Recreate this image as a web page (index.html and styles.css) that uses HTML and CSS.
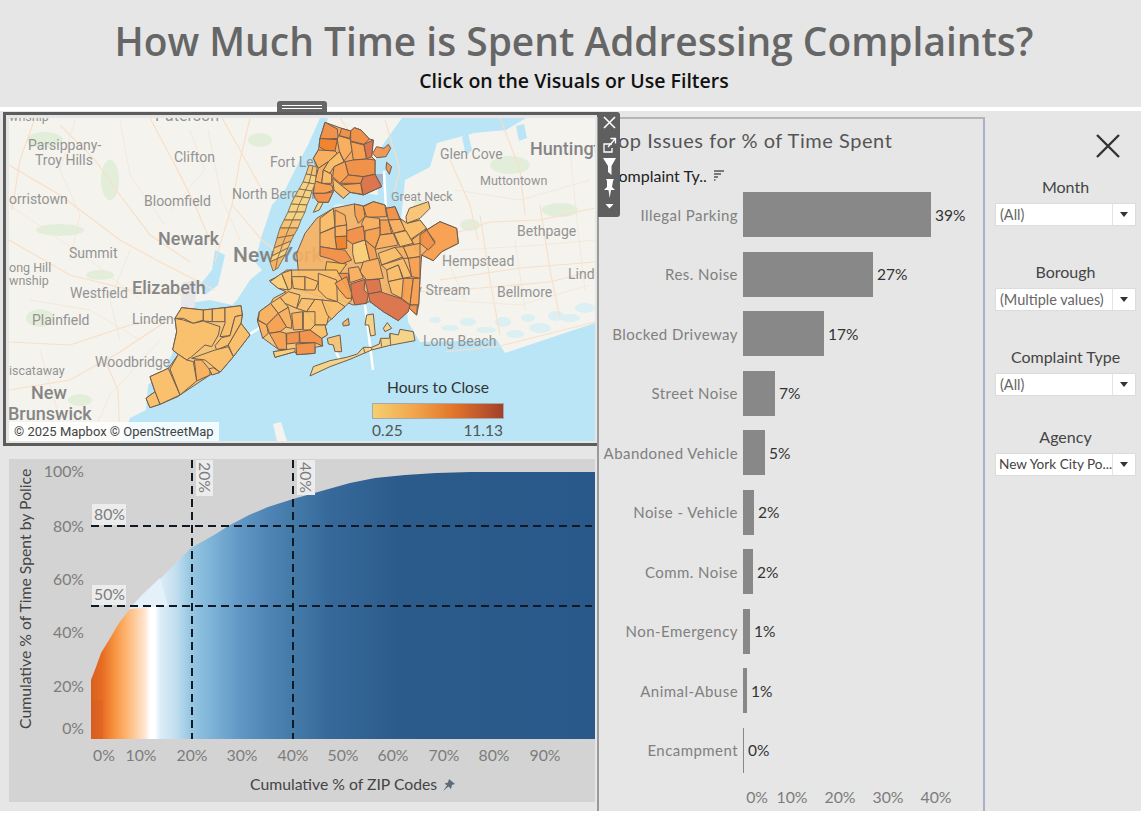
FILE: index.html
```html
<!DOCTYPE html>
<html lang="en">
<head>
    <meta charset="UTF-8">
    <meta name="viewport" content="width=device-width, initial-scale=1.0">
    <title>How Much Time is Spent Addressing Complaints?</title>
    <link rel="stylesheet" href="styles.css">
</head>
<body>

    <header class="title-bar">
        <h1>How Much Time is Spent Addressing Complaints?</h1>
        <p>Click on the Visuals or Use Filters</p>
    </header>

    <main class="board">
        <section class="left-col">
            <div class="grip"><span></span><span></span></div>

            <div class="map-frame">
                <svg class="map" viewBox="9 118 586 323" width="586" height="323">
                    <rect x="9" y="118" width="586" height="323" class="water"/>
                    <!-- land -->
                    <polygon class="land" points="9,118 320,118 308,145 300,160 285,190 272,205 262,235 255,262 262,270 250,280 237,300 232,305 210,300 190,303 178,315 176,345 165,370 148,385 146,410 130,418 122,441 9,441"/>
                    <polygon class="land" points="328,118 402,118 382,146 375,160 378,195 340,190 315,160"/>
                    <polygon class="land" points="405,180 430,167 437,143 474,133 506,130 526,118 595,118 595,323 505,353 497,340 420,342 413,330 408,322 400,230"/>
                    <polygon class="land" points="273,424 281,422 287,441 277,441"/>
                    <polygon class="water" points="215,250 225,255 218,285 205,295 200,285 212,270"/>
                    <polygon class="water" points="462,137 468,133 472,150 466,156"/>
                    <polygon class="water" points="516,126 524,124 527,138 519,141"/>
                    <polygon class="airport" points="183,282 198,280 194,310 180,310"/>
                    <ellipse class="rikers" cx="340" cy="207" rx="7" ry="3"/>
                    <g class="marsh">
                        <ellipse cx="450" cy="328" rx="9" ry="3"/>
                        <ellipse cx="468" cy="322" rx="8" ry="4"/>
                        <ellipse cx="486" cy="330" rx="10" ry="3"/>
                        <ellipse cx="503" cy="322" rx="8" ry="5"/>
                        <ellipse cx="515" cy="334" rx="9" ry="4"/>
                        <ellipse cx="528" cy="318" rx="7" ry="4"/>
                        <ellipse cx="540" cy="328" rx="11" ry="5"/>
                        <ellipse cx="556" cy="316" rx="8" ry="5"/>
                        <ellipse cx="570" cy="318" rx="10" ry="4"/>
                        <ellipse cx="585" cy="308" rx="10" ry="5"/>
                        <ellipse cx="435" cy="320" rx="6" ry="3"/>
                    </g>

                    <!-- parks -->
                    <g class="park">
                        <ellipse cx="45" cy="140" rx="18" ry="8"/>
                        <ellipse cx="110" cy="180" rx="9" ry="20"/>
                        <ellipse cx="60" cy="230" rx="24" ry="6"/>
                        <ellipse cx="100" cy="275" rx="14" ry="5"/>
                        <ellipse cx="40" cy="318" rx="14" ry="9"/>
                        <ellipse cx="260" cy="140" rx="12" ry="7"/>
                        <ellipse cx="420" cy="205" rx="7" ry="5"/>
                        <ellipse cx="510" cy="165" rx="20" ry="9"/>
                        <ellipse cx="560" cy="210" rx="18" ry="7"/>
                        <ellipse cx="470" cy="225" rx="10" ry="6"/>
                        <ellipse cx="80" cy="400" rx="12" ry="6"/>
                    </g>

                    <!-- roads -->
                    <g class="road">
                        <path d="M9 165 L60 195 L120 240 L160 262 L215 290"/>
                        <path d="M60 125 L95 160 L120 195 L150 235 L190 262"/>
                        <path d="M150 118 L175 165 L195 205 L212 245"/>
                        <path d="M9 240 L70 275 L130 290 L190 295"/>
                        <path d="M9 342 L70 345 L130 325 L175 318"/>
                        <path d="M35 118 L20 160 L12 210"/>
                        <path d="M250 118 L240 160 L232 205 L215 262"/>
                        <path d="M222 118 L240 150 L262 190"/>
                        <path d="M232 205 L262 240 L275 250"/>
                        <path d="M9 390 L70 380 L120 352 L165 322"/>
                        <path d="M120 441 L118 390 L105 360"/>
                        <path d="M340 118 L362 150"/>
                        <path d="M440 238 L490 222 L540 220 L595 208"/>
                        <path d="M480 215 L490 280 L500 335"/>
                        <path d="M540 205 L550 270 L560 318"/>
                        <path d="M415 292 L480 288 L550 282 L595 270"/>
                        <path d="M450 160 L470 205 L478 240"/>
                        <path d="M440 280 L520 268 L595 262"/>
                        <path d="M500 118 L520 170 L525 215"/>
                        <path d="M385 120 L400 170 L392 200"/>
                        <path d="M445 352 L500 346 L595 322"/>
                    </g>
                    <g class="road-thin">
                        <path d="M9 205 L90 260 L140 300"/>
                        <path d="M120 120 L130 175 L165 225"/>
                        <path d="M208 130 L222 200 L240 240"/>
                        <path d="M460 250 L540 245 L595 240"/>
                        <path d="M445 300 L520 305 L590 285"/>
                        <path d="M30 300 L90 310 L140 340"/>
                        <path d="M75 120 L60 170 L80 215 L70 260"/>
                        <path d="M130 250 L110 300 L120 340"/>
                        <path d="M40 350 L60 420"/>
                        <path d="M160 340 L110 395 L90 440"/>
                        <path d="M190 130 L205 170 L170 210"/>
                        <path d="M455 190 L520 200 L590 180"/>
                        <path d="M430 220 L465 300"/>
                        <path d="M515 240 L525 310"/>
                        <path d="M570 150 L578 230 L585 290"/>
                        <path d="M345 122 L370 140"/>
                    </g>
                    <polygon class="shield" points="375,174 383,174 383,184 379,189 375,184"/>

                    <!-- place names -->
                    <g class="place">
                        <text x="155" y="121" class="place-lg">Paterson</text>
                        <text x="9" y="121" class="place-sm">wnship</text>
                        <text x="28" y="150">Parsippany-</text>
                        <text x="35" y="165">Troy Hills</text>
                        <text x="174" y="162">Clifton</text>
                        <text x="270" y="167">Fort Lee</text>
                        <text x="232" y="199">North Bergen</text>
                        <text x="440" y="159">Glen Cove</text>
                        <text x="530" y="155" class="place-xl">Huntington</text>
                        <text x="480" y="185" class="place-sm">Muttontown</text>
                        <text x="391" y="201" class="place-sm">Great Neck</text>
                        <text x="9" y="204">orristown</text>
                        <text x="144" y="206">Bloomfield</text>
                        <text x="158" y="245" class="place-xl">Newark</text>
                        <text x="233" y="262" class="place-xxl">New York</text>
                        <text x="69" y="258">Summit</text>
                        <text x="9" y="272" class="place-sm">ong Hill</text>
                        <text x="9" y="285" class="place-sm">wnship</text>
                        <text x="132" y="294" class="place-xl">Elizabeth</text>
                        <text x="70" y="298">Westfield</text>
                        <text x="32" y="325">Plainfield</text>
                        <text x="132" y="324">Linden</text>
                        <text x="95" y="367">Woodbridge</text>
                        <text x="9" y="375" class="place-sm">iscataway</text>
                        <text x="31" y="399" class="place-xl">New</text>
                        <text x="8" y="420" class="place-xl">Brunswick</text>
                        <text x="517" y="236">Bethpage</text>
                        <text x="442" y="266">Hempstead</text>
                        <text x="385" y="295">Valley Stream</text>
                        <text x="497" y="297">Bellmore</text>
                        <text x="568" y="279">Linden</text>
                        <text x="423" y="346">Long Beach</text>
                    </g>

                    <!-- bridges -->
                    <g class="bridge">
                        <path d="M250 334 L264 325"/>
                        <path d="M365 305 L373 370"/>
                        <path d="M335 350 L340 360"/>
                        <path d="M384 171 L386 210"/>
                    </g>

                    <!-- Bronx -->
                    <g class="zips" transform="translate(260 115) scale(.3333)">
                        <polygon class="h3" points="195,22 245,40 272,48 283,38 303,45 328,72 340,75 335,125 345,135 345,178 365,215 310,240 270,232 250,250 222,225 205,262 175,262 160,235 165,198 175,160 160,130 175,105 177,95 180,70 188,45"/>
                        <polygon class="h4" points="195,22 232,42 235,70 200,72 180,70 188,45"/>
                        <polygon class="h5" points="180,70 200,72 232,74 225,108 195,106 177,95"/>
                        <polygon class="h2" points="235,62 270,72 278,105 252,138 238,108 232,75"/>
                        <polygon class="h4" points="245,40 272,48 270,70 238,62"/>
                        <polygon class="h4" points="272,48 283,38 303,45 328,72 312,88 272,78"/>
                        <polygon class="h3" points="272,80 312,90 320,132 280,135"/>
                        <polygon class="h6" points="312,88 340,75 335,125 320,132"/>
                        <polygon class="h4" points="350,95 372,100 385,88 392,100 378,125 350,128 338,115"/>
                        <polygon class="h4" points="380,142 395,155 388,178 378,160"/>
                        <polygon class="h4" points="280,135 320,132 345,135 345,178 310,185 265,180 255,140"/>
                        <polygon class="h6" points="310,185 345,178 365,215 310,240 302,205"/>
                        <polygon class="h3" points="255,140 265,180 240,205 218,185 222,155"/>
                        <polygon class="h4" points="240,205 265,180 310,185 302,205"/>
                        <polygon class="h3" points="240,210 302,205 308,238 270,232"/>
                        <polygon class="h1" points="218,190 240,208 270,232 250,250 222,225"/>
                        <polygon class="h2" points="160,130 175,105 195,106 225,108 232,115 205,140 175,160"/>
                        <polygon class="h1" points="205,140 238,110 252,140 222,155 210,175 190,165"/>
                        <polygon class="h2" points="175,160 205,140 190,165 185,205 165,198"/>
                        <polygon class="h1" points="190,165 215,178 215,205 185,205"/>
                        <polygon class="h3" points="165,198 185,205 215,210 220,225 195,235 160,235"/>
                        <polygon class="h4" points="160,235 195,235 220,230 205,262 175,262 165,250"/>
                        <polygon class="h0" points="175,262 190,262 178,285 160,292"/>
                    </g>

                    <!-- Manhattan -->
                    <g class="zips-page">
                        <polygon class="h1" points="309,165 317,167 316,176 306,174"/>
                        <polygon class="h0" points="306,174 316,176 315,184 303,182"/>
                        <polygon class="h0" points="303,182 315,184 312,191 299,189"/>
                        <polygon class="h0" points="299,189 312,191 310,198 295,196"/>
                        <polygon class="h0" points="295,196 310,198 307,205 291,204"/>
                        <polygon class="h0" points="291,204 307,205 305,212 288,212"/>
                        <polygon class="h0" points="288,212 305,212 301,220 284,220"/>
                        <polygon class="h1" points="284,220 301,220 298,228 280,228"/>
                        <polygon class="h2" points="280,228 298,228 294,235 277,238"/>
                        <polygon class="h2" points="277,238 294,235 291,241 274,248"/>
                        <polygon class="h1" points="274,248 291,241 288,248 272,256"/>
                        <polygon class="h0" points="272,256 288,248 285,255 270,262"/>
                        <polygon class="h2" points="270,262 285,255 278,268 273,271"/>
                        <polyline class="spine" points="313,166 311,175 309,183 305.5,190 302.5,197 299,204.5 296.5,212 292.5,220 289,228 285.5,236.5 282.5,244.5 280,252 277.5,258.5 275.5,269.5"/>
                    </g>

                    <!-- Queens -->
                    <g class="zips" transform="translate(320 190) scale(.3333)">
                        <polygon class="h2" points="-70,190 -45,130 -10,85 40,55 103,42 130,48 160,35 195,45 200,55 225,50 240,85 258,100 300,90 320,120 360,95 410,115 415,160 365,185 340,212 305,195 300,265 296,345 290,375 268,355 235,392 190,365 150,335 100,345 60,330 0,320 -60,300"/>
                        <polygon class="h1" points="268,55 325,35 330,55 300,85 260,100 258,80"/>
                        <polygon class="h3" points="103,42 130,48 135,80 115,100 105,75"/>
                        <polygon class="h3" points="130,50 160,35 195,45 200,80 140,82"/>
                        <polygon class="h4" points="198,55 225,50 240,88 205,90"/>
                        <polygon class="h2" points="135,80 178,85 180,115 130,125 125,100"/>
                        <polygon class="h3" points="180,90 205,90 215,130 180,135"/>
                        <polygon class="h2" points="205,90 240,88 258,120 220,130"/>
                        <polygon class="h1" points="240,85 262,100 300,90 320,115 270,150 255,120"/>
                        <polygon class="h4" points="80,122 130,108 135,150 98,162 80,150"/>
                        <polygon class="h3" points="135,122 180,112 180,135 165,175 135,150"/>
                        <polygon class="h2" points="180,135 220,130 235,165 165,178"/>
                        <polygon class="h1" points="222,130 258,122 280,160 240,170"/>
                        <polygon class="h2" points="275,150 320,115 300,160 290,185 280,160"/>
                        <polygon class="h3" points="320,120 360,95 410,115 415,160 365,185 340,212 305,195 330,170 345,155"/>
                        <polygon class="h4" points="300,135 320,120 345,160 325,180 300,160"/>
                        <polygon class="h5" points="45,140 80,138 80,175 50,178"/>
                        <polygon class="h1" points="0,85 40,55 45,110 0,130"/>
                        <polygon class="h2" points="45,60 75,75 80,105 45,110"/>
                        <polygon class="h2" points="45,110 80,105 80,138 45,140"/>
                        <polygon class="h2" points="0,130 45,112 45,140 50,178 0,170"/>
                        <polygon class="h4" points="0,170 50,178 75,180 85,195 95,210 65,222 35,208 0,198"/>
                        <polygon class="h0" points="98,162 135,150 150,215 105,220 98,190"/>
                        <polygon class="h3" points="135,150 165,175 172,205 150,215"/>
                        <polygon class="h1" points="175,190 225,172 250,200 185,225"/>
                        <polygon class="h2" points="225,172 250,170 265,205 250,205"/>
                        <polygon class="h2" points="250,170 300,160 300,200 265,205"/>
                        <polygon class="h3" points="265,205 300,200 300,265 275,260"/>
                        <polygon class="h1" points="185,225 250,205 275,260 250,265 235,225 200,240"/>
                        <polygon class="h1" points="200,240 235,225 248,265 205,275"/>
                        <polygon class="h2" points="130,215 175,205 190,265 140,270 120,245"/>
                        <polygon class="h2" points="85,235 115,230 130,265 90,278"/>
                        <polygon class="h1" points="205,275 250,265 255,300 245,325 215,310"/>
                        <polygon class="h3" points="250,265 280,265 270,345 245,325"/>
                        <polygon class="h3" points="280,265 300,265 296,345 270,345"/>
                        <polygon class="h4" points="270,345 292,345 290,375 268,355"/>
                        <polygon class="h0 warm" points="20,215 80,222 60,250 40,270 15,245"/>
                        <polygon class="h4" points="55,250 85,250 90,315 70,325 55,290"/>
                        <polygon class="h6" points="92,282 135,268 132,300 145,312 140,340 105,345 95,315"/>
                        <polygon class="h6" points="135,270 178,268 185,305 145,312"/>
                        <polygon class="h6" points="145,312 180,305 240,325 270,345 265,365 235,392 190,365 150,335"/>
                    </g>

                    <!-- Brooklyn and the bay -->
                    <g class="zips" transform="translate(250 270) scale(.3333)">
                        <polygon class="h1" points="58,32 85,18 110,0 260,0 300,70 305,90 285,110 262,130 225,165 232,195 215,205 218,228 195,232 195,250 140,254 135,245 75,262 70,245 110,240 85,238 40,205 22,150 28,125 62,100 70,85 108,65 85,55"/>
                        <polygon class="h0" points="60,35 95,10 115,60 85,55"/>
                        <polygon class="h1" points="95,10 125,0 125,55 115,60"/>
                        <polygon class="h1" points="125,20 165,20 165,60 130,55"/>
                        <polygon class="h1" points="165,20 205,35 195,60 165,60"/>
                        <polygon class="h1" points="205,10 260,30 262,95 230,85 205,60"/>
                        <polygon class="h3" points="255,40 290,20 305,70 305,85 290,85 268,60"/>
                        <polygon class="h1" points="115,65 150,75 140,115 105,100 90,82"/>
                        <polygon class="h1" points="155,85 195,88 170,125 140,115"/>
                        <polygon class="h1" points="195,88 220,90 240,120 230,165 195,165 170,125"/>
                        <polygon class="h1" points="215,90 262,95 285,110 262,130 245,148 232,135"/>
                        <polygon class="h2" points="28,125 62,100 85,130 50,165 25,150"/>
                        <polygon class="h1" points="62,100 90,82 115,112 85,130"/>
                        <polygon class="h2" points="22,150 50,165 55,190 38,205"/>
                        <polygon class="h3" points="50,165 85,130 110,170 90,185 58,190"/>
                        <polygon class="h2" points="85,130 115,112 125,155 125,175 110,172"/>
                        <polygon class="h3" points="58,190 90,185 108,190 110,238 85,238"/>
                        <polygon class="h4" points="110,190 148,185 148,218 110,222"/>
                        <polygon class="h2" points="125,130 158,125 158,178 130,180"/>
                        <polygon class="h1" points="160,125 195,125 195,165 180,180 160,180"/>
                        <polygon class="h4" points="148,185 180,180 215,205 218,228 195,218 150,218"/>
                        <polygon class="h4" points="138,222 195,218 195,250 140,254"/>
                        <polygon class="h0" points="75,262 70,245 135,235 135,245"/>
                        <polygon class="h1" points="195,165 225,165 232,195 215,205 180,180"/>
                        <polygon class="h1" points="232,205 270,195 275,245 255,245 250,225 235,222"/>
                        <polygon class="h2" points="278,158 295,145 298,165 280,168"/>
                        <polygon class="h0" points="350,135 370,132 376,195 362,198 356,165 345,165"/>
                        <polygon class="h0" points="400,175 412,158 425,175 405,185"/>
                        <polygon class="h0" points="180,318 240,290 300,268 365,240 420,226 495,212 490,185 450,178 445,195 420,190 418,205 392,205 388,222 365,232 340,232 322,252 290,262 240,272 190,290"/>
                        <path class="cut" d="M365 232 L365 240 M392 205 L395 230 M420 190 L422 226 M340 232 L345 250"/>
                    </g>

                    <!-- Staten Island -->
                    <g class="zips" transform="translate(135 295) scale(.3333)">
                        <polygon class="h1" points="140,38 205,45 270,38 318,32 322,60 318,85 345,120 295,185 255,232 225,240 135,300 128,305 75,328 45,338 33,310 60,290 45,245 100,220 130,178 113,165 125,110 120,70"/>
                        <polygon class="h1" points="120,70 140,38 205,45 205,75 175,85 145,70"/>
                        <polygon class="h1" points="205,45 232,42 232,80 205,78"/>
                        <polygon class="h1" points="232,42 270,38 270,80 232,80"/>
                        <polygon class="h1" points="270,38 318,32 322,60 300,65 285,122 255,125 270,85"/>
                        <polygon class="h1" points="130,178 113,165 125,110 120,70 145,75 175,85 205,78 255,95 250,120 230,155 210,150 170,185 155,195"/>
                        <polygon class="h1" points="300,65 322,60 318,85 280,150 245,165 240,152 260,128 285,122"/>
                        <polygon class="h1" points="318,85 345,120 295,185 280,150"/>
                        <polygon class="h1" points="170,190 240,165 280,155 295,185 255,232 235,215 210,195"/>
                        <polygon class="h2" points="178,195 200,195 225,225 225,240 185,258"/>
                        <polygon class="h1" points="222,222 235,218 255,232 232,240"/>
                        <polygon class="h1" points="130,178 155,195 175,200 185,258 135,300 105,222"/>
                        <polygon class="h1" points="45,245 100,220 135,300 75,328 60,290"/>
                        <polygon class="h1" points="33,310 60,290 75,328 45,338"/>
                    </g>

                    <!-- legend -->
                    <defs>
                        <linearGradient id="hours">
                            <stop offset="0" stop-color="#f4d071"/>
                            <stop offset=".3" stop-color="#f2a850"/>
                            <stop offset=".62" stop-color="#e2752a"/>
                            <stop offset="1" stop-color="#a23f2b"/>
                        </linearGradient>
                        <linearGradient id="share" gradientUnits="userSpaceOnUse" x1="91" y1="0" x2="595" y2="0">
                            <stop offset="0" stop-color="#d85f20"/>
                            <stop offset=".024" stop-color="#e86e24"/>
                            <stop offset=".044" stop-color="#f58f3c"/>
                            <stop offset=".067" stop-color="#fdb06a"/>
                            <stop offset=".087" stop-color="#fecb9c"/>
                            <stop offset=".109" stop-color="#fee9d8"/>
                            <stop offset=".117" stop-color="#ffffff"/>
                            <stop offset=".127" stop-color="#ffffff"/>
                            <stop offset=".137" stop-color="#dcedf7"/>
                            <stop offset=".167" stop-color="#c4dff0"/>
                            <stop offset=".196" stop-color="#98c8e3"/>
                            <stop offset=".236" stop-color="#7fb5d8"/>
                            <stop offset=".296" stop-color="#6197c5"/>
                            <stop offset=".355" stop-color="#4e83b5"/>
                            <stop offset=".401" stop-color="#447aa8"/>
                            <stop offset=".474" stop-color="#36699a"/>
                            <stop offset=".613" stop-color="#2b5b8b"/>
                            <stop offset="1" stop-color="#29588a"/>
                        </linearGradient>
                    </defs>
                    <text x="438" y="393" class="legend-title">Hours to Close</text>
                    <rect x="372.5" y="403.5" width="131" height="15" fill="url(#hours)" class="legend-bar"/>
                    <text x="372" y="436" class="legend-num">0.25</text>
                    <text x="503" y="436" class="legend-num legend-end">11.13</text>

                    <rect x="9" y="422" width="210" height="19" class="credit-box"/>
                    <text x="14" y="436" class="credit">© 2025 Mapbox © OpenStreetMap</text>
                </svg>
            </div>

            <div class="toolbar">
                <svg width="22" height="105" viewBox="0 0 22 105">
                    <path class="tool-line" d="M6 5 L17 16 M17 5 L6 16"/>
                    <path class="tool-thin" d="M14 32 L6 32 L6 40 L14 40 L14 36 M10 35 L17 27 M12.5 26.500 L17.500 26.500 L17.500 31.500"/>
                    <polygon class="tool-fill" points="5,46 18,46 13.500,54 13.500,63 10,60 10,54"/>
                    <path class="tool-fill" d="M8 67 L16 67 L15 69 L14 75 L17 78 L13 78 L11.700 86 L10.500 78 L6 78 L9 75 L9 69 Z"/>
                    <polygon class="tool-fill" points="7.500,92 15.500,92 11.500,96.500"/>
                </svg>
            </div>

            <div class="curve-panel">
                <svg viewBox="9 459 586 343" width="586" height="343">
                    <polygon fill="url(#share)" points="91,739 91,680 96,667 101,653 109,640 119,623 130,609 142,595 161,578 176,563 191,548 214,535 230,525 249,515 268,507 293,499 325,490 350,483 375,478 405,475 436,473 471,472 595,472 595,739"/>
                    <polygon class="curve-top" points="129,609 142,595 160,578 168,606"/>
                    <polygon class="curve-dark" points="91,739 91,700 103,700 103,739"/>

                    <rect x="196" y="460" width="17" height="36" class="ref-box"/>
                    <rect x="297" y="460" width="18" height="35" class="ref-box"/>
                    <rect x="92" y="504" width="34" height="21" class="ref-box"/>
                    <rect x="92" y="585" width="34" height="20" class="ref-box"/>
                    <text transform="translate(199 462) rotate(90)" class="tick">20%</text>
                    <text transform="translate(300 462) rotate(90)" class="tick">40%</text>
                    <text x="94" y="520" class="tick">80%</text>
                    <text x="94" y="600" class="tick">50%</text>

                    <path class="ref-line" d="M192 460 V739 M293 460 V739 M91 526 H592 M91 606 H592"/>

                    <g class="tick tick-end">
                        <text x="84" y="477">100%</text>
                        <text x="84" y="532">80%</text>
                        <text x="84" y="585">60%</text>
                        <text x="84" y="638">40%</text>
                        <text x="84" y="692">20%</text>
                        <text x="84" y="734">0%</text>
                    </g>
                    <g class="tick tick-mid">
                        <text x="104" y="761">0%</text>
                        <text x="141" y="761">10%</text>
                        <text x="192" y="761">20%</text>
                        <text x="242" y="761">30%</text>
                        <text x="293" y="761">40%</text>
                        <text x="343" y="761">50%</text>
                        <text x="393" y="761">60%</text>
                        <text x="444" y="761">70%</text>
                        <text x="494" y="761">80%</text>
                        <text x="545" y="761">90%</text>
                    </g>
                    <text transform="translate(31 729) rotate(-90)" class="axis-name">Cumulative % of Time Spent by Police</text>
                    <text x="250" y="790" class="axis-name">Cumulative % of ZIP Codes</text>
                    <path class="axis-pin" d="M449 779 L455 784 L452 785 L451 789 L448.500 786.500 L443 791 L447 785.500 L444.500 783.500 L448 782.500 Z"/>
                </svg>
            </div>
        </section>

        <section class="issues">
            <h2>Top Issues for % of Time Spent</h2>
            <div class="issues-head">
                <span>Complaint Ty..</span>
                <svg width="12" height="12" viewBox="0 0 12 12"><path class="sort-icon" d="M1 2 H11 M1 5 H8 M1 8 H5 M1 11 H2.500"/></svg>
            </div>
            <div class="bars">
                <div class="bar-row"><span class="bar-label">Illegal Parking</span><div class="bar" style="width:188px"></div><span class="bar-value">39%</span></div>
                <div class="bar-row"><span class="bar-label">Res. Noise</span><div class="bar" style="width:130px"></div><span class="bar-value">27%</span></div>
                <div class="bar-row"><span class="bar-label">Blocked Driveway</span><div class="bar" style="width:81px"></div><span class="bar-value">17%</span></div>
                <div class="bar-row"><span class="bar-label">Street Noise</span><div class="bar" style="width:32px"></div><span class="bar-value">7%</span></div>
                <div class="bar-row"><span class="bar-label">Abandoned Vehicle</span><div class="bar" style="width:22px"></div><span class="bar-value">5%</span></div>
                <div class="bar-row"><span class="bar-label">Noise - Vehicle</span><div class="bar" style="width:11px"></div><span class="bar-value">2%</span></div>
                <div class="bar-row"><span class="bar-label">Comm. Noise</span><div class="bar" style="width:10px"></div><span class="bar-value">2%</span></div>
                <div class="bar-row"><span class="bar-label">Non-Emergency</span><div class="bar" style="width:7px"></div><span class="bar-value">1%</span></div>
                <div class="bar-row"><span class="bar-label">Animal-Abuse</span><div class="bar" style="width:4px"></div><span class="bar-value">1%</span></div>
                <div class="bar-row"><span class="bar-label">Encampment</span><div class="bar" style="width:1px"></div><span class="bar-value">0%</span></div>
            </div>
            <div class="bar-axis">
                <span class="axis-zero">0%</span><span>10%</span><span>20%</span><span>30%</span><span>40%</span>
            </div>
        </section>

        <aside class="filters">
            <svg class="close-x" width="24" height="24" viewBox="0 0 24 24"><path d="M1 1 L23 23 M23 1 L1 23"/></svg>

            <div class="filter">
                <label>Month</label>
                <div class="select"><span>(All)</span><i></i></div>
            </div>
            <div class="filter">
                <label>Borough</label>
                <div class="select"><span>(Multiple values)</span><i></i></div>
            </div>
            <div class="filter">
                <label>Complaint Type</label>
                <div class="select"><span>(All)</span><i></i></div>
            </div>
            <div class="filter filter-last">
                <label>Agency</label>
                <div class="select"><span class="picked">New York City Po...</span><i></i></div>
            </div>
        </aside>
    </main>

</body>
</html>
```

FILE: styles.css
```css
body {
    margin: 0;
    background-color: white;
    font-family: 'Lato', 'Open Sans', sans-serif;
    overflow: hidden;
}

.title-bar {
    height: 107px;
    padding-left: 7px;
    box-sizing: border-box;
    background-color: #e6e6e6;
    text-align: center;
    font-family: 'Open Sans', sans-serif;
}

.title-bar h1 {
    margin: 0;
    padding-top: 15px;
    font-size: 38.900px;
    line-height: 52px;
    font-weight: 600;
    color: #666666;
}

.title-bar p {
    margin: 0;
    font-size: 19.500px;
    line-height: 27px;
    font-weight: 600;
    color: #111;
}

.board {
    display: flex;
    align-items: flex-start;
    height: 700px;
    margin-top: 4px;
    background-color: #e6e6e6;
}

/* left column */
.left-col {
    position: relative;
    width: 598px;
    margin-left: 3px;
    padding-top: 1px;
    flex: none;
}

.grip {
    position: absolute;
    left: 274px;
    top: -10px;
    width: 50px;
    height: 11px;
    background: #666;
    border-radius: 3px 3px 0 0;
    display: flex;
    flex-direction: column;
    align-items: center;
    justify-content: center;
    gap: 2px;
}

.grip span {
    display: block;
    width: 40px;
    height: 1px;
    background: #fff;
}

.map-frame {
    box-sizing: border-box;
    width: 597px;
    height: 334px;
    padding: 3px 2px 2px 3px;
    border: 3px solid #5c5c5c;
}

.map {
    display: block;
}

.water { fill: #b9e5f6; }
.land { fill: #f5f3ee; }
.marsh ellipse { fill: #dceff2; }
.airport { fill: #e8e8ec; }
.rikers { fill: #d9eff7; }
.park ellipse { fill: #e3eeda; }
.road path { fill: none; stroke: #f8dfc6; stroke-width: 1.1; }
.road-thin path { fill: none; stroke: #f3e6d6; stroke-width: .8; }
.bridge path { fill: none; stroke: #ffffff; stroke-width: 2.5; }
.shield { fill: #a4b4ca; }

.place text {
    font-family: 'Roboto', sans-serif;
    font-size: 14px;
    fill: #939393;
}

.place .place-sm { font-size: 12.500px; }
.place .place-lg { font-size: 16px; }
.place .place-xl { font-size: 18px; font-weight: 500; fill: #858585; }
.place .place-xxl { font-size: 21px; font-weight: 500; fill: #858585; }

.zips polygon {
    stroke: #6f5c4e;
    stroke-width: 3;
    fill-opacity: .9;
}

.zips-page polygon {
    stroke: #7c6a52;
    stroke-width: .9;
    fill-opacity: .95;
}

.spine, .cut {
    fill: none;
    stroke: #7c6a52;
}

.spine { stroke-width: .9; }
.cut { stroke-width: 3; }

.h0 { fill: #f9d27c; }
.h1 { fill: #f9c06c; }
.h2 { fill: #f8b060; }
.h3 { fill: #f6a052; }
.h4 { fill: #f18f48; }
.h5 { fill: #ef7f2a; }
.h6 { fill: #d9704c; }
.warm { fill: #f9bd58; }

.legend-title {
    font-size: 15.600px;
    fill: #333;
    text-anchor: middle;
}

.legend-bar { stroke: #a8a8a8; stroke-width: 1; }

.legend-num {
    font-size: 15.500px;
    fill: #555;
}

.legend-end { text-anchor: end; }

.credit-box { fill: rgba(255, 255, 255, .82); }

.credit {
    font-family: 'Roboto', sans-serif;
    font-size: 13px;
    fill: #444;
}

.toolbar {
    position: absolute;
    left: 595px;
    top: 1px;
    width: 22px;
    height: 105px;
    background: #5f5f5f;
    border-radius: 0 3px 3px 0;
    z-index: 2;
}

.toolbar svg { display: block; }

.tool-line { fill: none; stroke: #fff; stroke-width: 1.6; }
.tool-thin { fill: none; stroke: #fff; stroke-width: 1.3; }
.tool-fill { fill: #fff; }

.curve-panel {
    width: 586px;
    height: 343px;
    margin: 13px 0 0 6px;
    background-color: #d3d3d3;
}

.curve-panel svg { display: block; }

.curve-top { fill: #e4f1f9; }
.curve-dark { fill: #d45a20; opacity: .3; }
.ref-box { fill: #ececec; }

.ref-line {
    fill: none;
    stroke: #111a24;
    stroke-width: 2;
    stroke-dasharray: 8 5;
}

.tick {
    font-size: 15.800px;
    fill: #7c7c7c;
}

.tick-end { text-anchor: end; }
.tick-mid { text-anchor: middle; }

.axis-name {
    font-size: 15.750px;
    fill: #444;
}

.axis-pin { fill: #5e6b78; }

/* bar chart */
.issues {
    flex: none;
    box-sizing: border-box;
    width: 388px;
    height: 698px;
    margin: 6px 0 0 -4px;
    padding-left: 9px;
    border: 2px solid #b5b5b5;
    border-left-color: #9a9a9a;
    border-right-color: #aab0c8;
    background-color: #e6e6e6;
    position: relative;
}

.issues h2 {
    margin: 9px 0 0;
    font-size: 20px;
    line-height: 24px;
    font-weight: 400;
    color: #555;
    letter-spacing: .55px;
}

.issues-head {
    display: flex;
    align-items: center;
    gap: 6px;
    height: 20px;
    margin-top: 13px;
    font-size: 16px;
    font-weight: 400;
    color: #222;
}

.sort-icon { fill: none; stroke: #555; stroke-width: 1.4; }

.bars {
    margin: 0 0 0 -9px;
}

.bar-row {
    display: flex;
    align-items: center;
    height: 59.500px;
}

.bar-label {
    width: 139px;
    margin-right: 5px;
    flex: none;
    text-align: right;
    font-size: 15px;
    letter-spacing: .45px;
    color: #808080;
    white-space: nowrap;
}

.bar {
    height: 45px;
    background-color: #888888;
    flex: none;
}

.bar-value {
    margin-left: 4px;
    font-size: 15.500px;
    color: #333;
}

.bar-axis {
    display: grid;
    grid-template-columns: repeat(5, 48px);
    margin: 7px 0 0 112px;
    font-size: 15.800px;
    color: #7c7c7c;
    text-align: center;
}

.axis-zero { text-align: right; }

/* filters */
.filters {
    flex: none;
    width: 141px;
    margin-left: 10px;
    display: flex;
    flex-direction: column;
}

.close-x {
    align-self: flex-end;
    margin: 23px 16px 19px 0;
}

.close-x path {
    fill: none;
    stroke: #333;
    stroke-width: 2.400;
}

.filter {
    display: flex;
    flex-direction: column;
}

.filter + .filter { margin-top: 36px; }
.filter.filter-last { margin-top: 31px; }

.filter label {
    height: 26px;
    line-height: 20px;
    font-size: 16px;
    text-align: center;
    color: #444;
}

.select {
    display: flex;
    height: 23px;
    box-sizing: border-box;
    background: white;
    border: 1px solid #dcdcdc;
    font-size: 14.500px;
    line-height: 21px;
    color: #666;
}

.select span {
    flex: 1;
    padding-left: 4px;
    white-space: nowrap;
    overflow: hidden;
}

.select .picked { color: #444; padding-left: 3px; font-size: 13.600px; }

.select i {
    position: relative;
    width: 22px;
    flex: none;
    border-left: 1px solid #e4e4e4;
}

.select i::after {
    content: '';
    position: absolute;
    left: 7px;
    top: 8px;
    border-left: 4px solid transparent;
    border-right: 4px solid transparent;
    border-top: 5px solid #333;
}
```
